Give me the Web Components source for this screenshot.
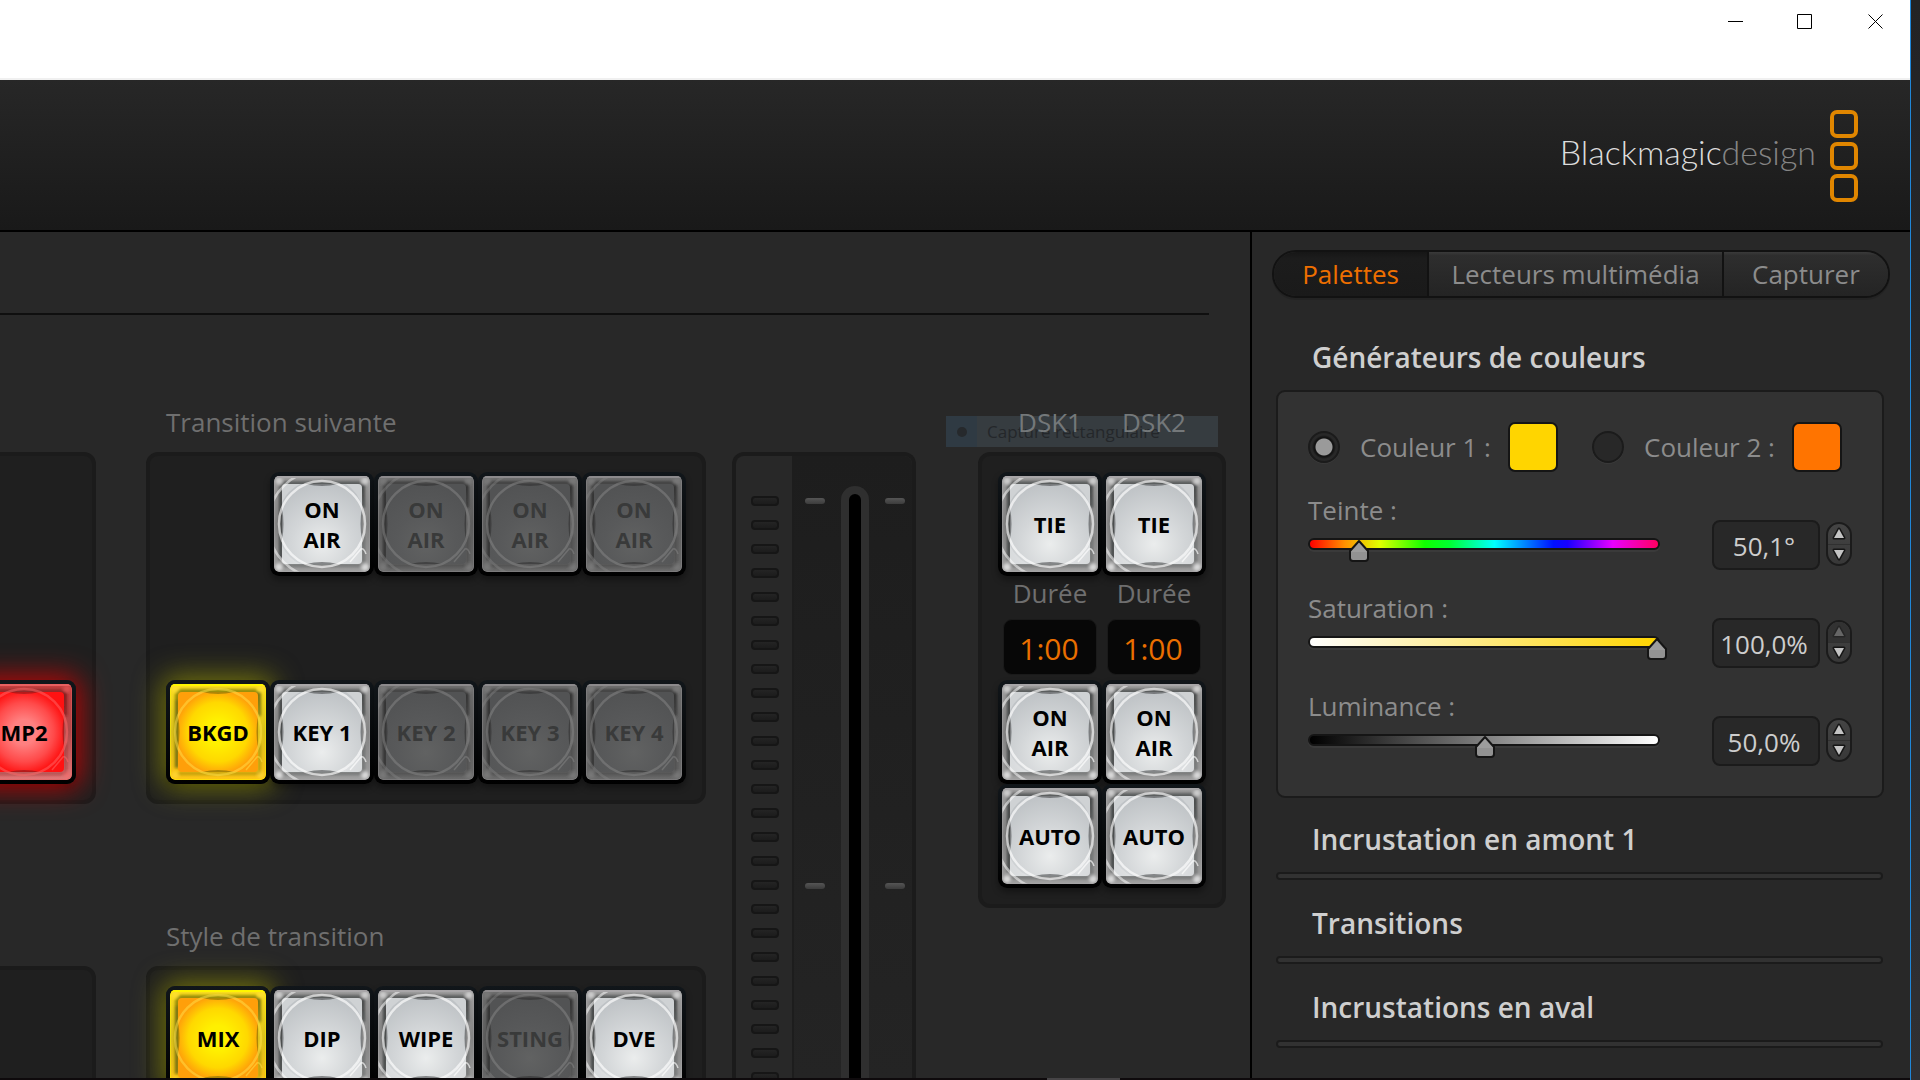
<!DOCTYPE html>
<html lang="fr">
<head>
<meta charset="utf-8">
<title>ATEM Software Control</title>
<style>
  html, body { margin: 0; height: 100%; overflow: hidden; background: #282828; }
  body { font-family: "Open Sans", "Noto Sans", sans-serif; }
</style>
</head>
<body>
<switcher-app></switcher-app>

<script>
const define = (name, html, setup) => {
  const template = document.createElement('template');
  template.innerHTML = html;
  customElements.define(name, class extends HTMLElement {
    constructor() {
      super();
      this.attachShadow({ mode: 'open' }).append(template.content.cloneNode(true));
    }
    connectedCallback() { if (setup) setup(this, this.shadowRoot); }
  });
};

/* Window caption with minimise / maximise / close */
define('title-bar', `
<style>
  :host { display: flex; justify-content: flex-end; align-items: flex-start; height: 78px; background: #fff; border-bottom: 2px solid #f0f0f0; }
  button { width: 70px; height: 43px; padding: 0; border: 0; background: none; display: flex; align-items: center; justify-content: center; }
  svg { display: block; fill: none; stroke: #000; }
</style>
<button aria-label="Réduire"><svg width="15" height="15"><path d="M0 7.5H15"/></svg></button>
<button aria-label="Agrandir"><svg width="16" height="15"><path d="M.5 .5H14.5V14.5H.5Z"/></svg></button>
<button aria-label="Fermer"><svg width="15" height="15"><path d="M.5 .5L14.5 14.5M14.5 .5L.5 14.5"/></svg></button>
`);

define('brand-header', `
<style>
  :host { display: flex; justify-content: flex-end; align-items: center; gap: 14px; box-sizing: border-box; height: 152px; padding: 2px 52px 0 0;
    background: linear-gradient(#272727, #191919); border-bottom: 2px solid #000; }
  p { margin: 0 0 8px; font: 300 34px/48px Lato, sans-serif; color: #dcdcdc; }
  p span { color: #858585; }
  svg { display: block; fill: none; stroke: #e08600; stroke-width: 4; }
</style>
<p>Blackmagic<span>design</span></p>
<svg width="28" height="92"><rect x="2" y="2" width="24" height="24" rx="5"/><rect x="2" y="34" width="24" height="24" rx="5"/><rect x="2" y="66" width="24" height="24" rx="5"/></svg>
`);

/* Illuminated push button */
define('key-button', `
<style>
  :host { display: block; width: 104px; height: 104px;
    --f1: #ebeded; --f2: #d3d6d8; --f3: #bfc3c6; --e1: #a0a0a0; --e2: #858585; --e3: #a0a0a0; --shade: #3c3e40; --ring: #fff; --ringo: .65; --top: #a8a6a8; --ink: #000; }
  :host([state=off]) { --f1: #616262; --f2: #58595a; --f3: #525354; --e1: #707070; --e2: #5e5e5e; --e3: #6a6a6a; --shade: #2e2e2e; --ring: #888; --ringo: .5; --top: #8c8a8c; --ink: #393a3a; }
  :host([state=yellow]) { --f1: #fff000; --f2: #ffd800; --f3: #ff9f0a; --e1: #ffe01e; --e2: #dcc21c; --e3: #ffc414; --shade: #6a6808; --ring: #ffe24a; --ringo: .5; --top: #fff600; }
  :host([state=red]) { --f1: #ff8080; --f2: #ff4a4a; --f3: #ff1212; --e1: #c84040; --e2: #b04a4a; --e3: #e07878; --shade: #7a1818; --ring: #ff6a6a; --ringo: .5; --top: #e86060; }
  button { position: relative; display: grid; place-items: center; box-sizing: border-box; width: 104px; height: 104px; padding: 4px; border: 0; border-radius: 9px;
    background: linear-gradient(#11161a, #000); box-shadow: 0 4px 6px rgba(0,0,0,.35); font: inherit; color: var(--ink); }
  :host([state=yellow]) button { box-shadow: 0 0 28px 4px rgba(170,170,0,.62), 0 4px 6px rgba(0,0,0,.35); }
  :host([state=red]) button { box-shadow: 0 0 28px 4px rgba(230,0,0,.8), 0 4px 6px rgba(0,0,0,.35); }
  svg, span { grid-area: 1 / 1; }
  svg { display: block; border-radius: 5px; }
  span { position: relative; font-size: 22px; line-height: 30px; font-weight: 700; text-align: center; }
  .l1 { stop-color: var(--f1); } .l2 { stop-color: var(--f2); } .l3 { stop-color: var(--f3); }
  .m1 { stop-color: var(--e1); } .m2 { stop-color: var(--e2); } .m3 { stop-color: var(--e3); }
  .s { fill: var(--shade); } .r { stroke: var(--ring); fill: none; opacity: var(--ringo); }
  .wide { opacity: calc(var(--ringo) * .8); }
  .corner { fill: var(--ring); opacity: .25; }
</style>
<button part="key">
  <svg width="96" height="96" viewBox="0 0 96 96" aria-hidden="true">
    <defs>
      <radialGradient id="f" cx="50%" cy="75%" r="75%"><stop class="l1" offset="0"/><stop class="l2" offset=".5"/><stop class="l3" offset="1"/></radialGradient>
      <radialGradient id="g" cx="50%" cy="50%" r="62%"><stop class="l1" offset=".25"/><stop class="l2" offset=".6"/><stop class="l3" offset=".85"/></radialGradient>
      <linearGradient id="m" x2="0" y2="1"><stop class="m1" offset="0"/><stop class="m2" offset=".5"/><stop class="m3" offset="1"/></linearGradient>
      <filter id="b" x="-20%" y="-20%" width="140%" height="140%"><feGaussianBlur stdDeviation="1.4"/></filter>
      <clipPath id="left"><path d="M0 0H40V96H0Z"/></clipPath>
    </defs>
    <rect width="96" height="96" rx="5" fill="url(#m)"/>
    <g filter="url(#b)">
      <path class="s" opacity=".7" d="M10 5H86L90 12V32L86 10H10L8 84H5V10Z"/>
      <path class="s" opacity=".85" d="M86 8H91V32H88Z M5 16H9V84H5Z"/>
      <path class="s" opacity=".45" d="M8 88H88V91H8Z M88 60H91V90H88Z"/>
      <circle class="r" cx="5" cy="5" r="2" stroke-width="2"/><circle class="r" cx="91" cy="91" r="2" stroke-width="3"/><circle class="r" cx="5" cy="91" r="2" stroke-width="3"/><circle class="r" cx="91" cy="5" r="2" stroke-width="2"/>
    </g>
    <rect x="8" y="8" width="80" height="80" rx="4" class="face" fill="url(#f)"/>
    <path class="corner" d="M72 8H84Q88 8 88 12V30Q84 16 72 8Z M88 66V84Q88 88 84 88H66Q80 82 88 66Z M8 70V84Q8 88 12 88H26Q14 82 8 70Z M26 8H12Q8 8 8 12V26Q14 14 26 8Z"/>
    <path class="s" opacity=".55" d="M32 8H64Q48 12 32 8Z M32 88H64Q48 84 32 88Z M8 32V64Q11 48 8 32Z M88 32V64Q85 48 88 32Z"/>
    <circle class="r" cx="48" cy="48" r="43" stroke-width="2.5"/>
    <circle class="r wide" cx="48" cy="48" r="54" stroke-width="2.5" clip-path="url(#left)"/>
    <path class="r" stroke-width="1.5" d="M76 86L87 73Q90 72 92 78"/>
    <rect width="96" height="2" style="fill:var(--top)"/>
    <rect x=".5" y=".5" width="95" height="95" rx="5" fill="none" style="stroke:var(--top)" opacity=".5"/>
  </svg>
  <span><slot></slot></span>
</button>
`, (host, root) => {
  const lit = ['yellow', 'red'].includes(host.getAttribute('state'));
  if (lit) {
    root.querySelector('.face').setAttribute('fill', 'url(#g)');
    root.querySelectorAll('.wide, .corner').forEach(el => el.remove());
  }
  if (host.getAttribute('state') === 'off') {
    root.querySelectorAll('.corner').forEach(el => el.remove());
    root.querySelector('button').disabled = true;
  }
});

define('key-panel', `
<style>
  :host { display: block; box-sizing: border-box; padding: 16px; border: 4px solid #1b1b1b; border-radius: 12px; background: #1f1f1f; }
</style>
<slot></slot>
`);

define('column-label', `
<style>
  :host { display: block; height: 36px; padding-bottom: 12px; font-size: 26px; line-height: 36px; color: #6f6f6f; white-space: nowrap; }
</style>
<slot></slot>
`);

/* Transition lever with its level lights */
define('transition-lever', `
<style>
  :host { display: flex; box-sizing: border-box; width: 184px; border: 4px solid #1b1b1b; border-bottom: 0; border-radius: 12px 12px 0 0; background: #282828; overflow: hidden; }
  .lights { display: flex; flex-direction: column; align-items: center; gap: 14px; width: 54px; padding: 40px 0 0 2px; border-right: 2px solid #1d1d1d; overflow: hidden; }
  .lights i { flex: none; box-sizing: border-box; width: 28px; height: 10px; border: 2px solid #161616; border-radius: 4px; background: linear-gradient(#242424, #1c1c1c); }
  .travel { flex: 1; display: flex; justify-content: space-between; padding: 30px 7px 0 11px; background: linear-gradient(#1d1d1d, #242424); }
  .marks { display: flex; flex-direction: column; gap: 379px; padding-top: 12px; }
  .marks i { width: 20px; height: 6px; border-radius: 3px; background: linear-gradient(#555, #3c3c3c); }
  .slot { box-sizing: border-box; width: 28px; padding: 8px 8px 0; border-radius: 14px 14px 0 0; background: #2f2f2f; display: flex; }
  .slot i { flex: 1; border-radius: 6px 6px 0 0; background: #000; }
</style>
<div class="lights"></div>
<div class="travel"><div class="marks"><i></i><i></i></div><div class="slot"><i></i></div><div class="marks"><i></i><i></i></div></div>
`, (host, root) => {
  root.querySelector('.lights').innerHTML = '<i></i>'.repeat(30);
});

define('rate-field', `
<style>
  :host { display: flex; flex-direction: column; align-items: center; box-sizing: border-box; width: 104px; height: 104px; }
  label { font-size: 26px; line-height: 34px; color: #6f6f6f; }
  input { box-sizing: border-box; width: 94px; height: 56px; margin-top: 9px; padding: 2px 2px 0 0; border: 1px solid #1a1a1a; border-radius: 9px; background: #070707;
    font: 30px/40px "Open Sans", "Noto Sans", sans-serif; color: #ea6f00; text-align: center; }
</style>
<label for="rate">Durée</label><input id="rate" value="1:00">
`);

define('switcher-desk', `
<style>
  :host { display: flex; flex-direction: column; min-width: 0; overflow: hidden; }
  .top { flex: none; height: 81px; margin-right: 41px; border-bottom: 2px solid #0f0f0f; }
  .board { flex: 1; min-height: 0; display: flex; padding: 89px 24px 0 0; }
  .edge { flex: 1; min-width: 0; display: flex; flex-direction: column; margin-left: -40px; }
  .edge key-panel { flex: none; height: 352px; display: flex; align-items: flex-end; justify-content: flex-end; }
  .edge .first { margin-top: 48px; }
  .edge .below { margin-top: 162px; }
  .bank { margin-left: 50px; }
  .bank column-label { padding-left: 20px; }
  .second { margin-top: 114px; }
  .keys { display: grid; grid-template-columns: repeat(5, 104px); grid-auto-rows: 104px; }
  .keys .start2 { grid-column: 2; }
  .keys .row3 { grid-row: 3; }
  transition-lever { margin: 48px 0 0 26px; }
  .dsk { position: relative; margin-left: 62px; }
  .names { display: grid; grid-template-columns: 104px 104px; justify-content: center; text-align: center; position: relative; }
  .names column-label { color: #74787a; }
  .pair { display: grid; grid-template-columns: 104px 104px; }
  .ghost { position: absolute; top: 12px; right: 8px; display: flex; align-items: center; width: 272px; height: 31px; background: #363c40;
    font-size: 17px; line-height: 24px; color: #24272a; white-space: nowrap; }
  .ghost i { display: grid; place-items: center; width: 31px; height: 31px; margin-right: 10px; background: #2f3a43; }
  .ghost i::before { content: ""; width: 10px; height: 10px; border-radius: 50%; background: #26292c; }
</style>
<div class="top"></div>
<div class="board">
  <div class="edge">
    <key-panel class="first"><key-button state="red">MP2</key-button></key-panel>
    <key-panel class="below"></key-panel>
  </div>
  <div class="bank">
    <column-label>Transition suivante</column-label>
    <key-panel><div class="keys">
      <key-button class="start2">ON<br>AIR</key-button><key-button state="off">ON<br>AIR</key-button><key-button state="off">ON<br>AIR</key-button><key-button state="off">ON<br>AIR</key-button>
      <key-button class="row3" state="yellow">BKGD</key-button><key-button class="row3">KEY 1</key-button><key-button class="row3" state="off">KEY 2</key-button><key-button class="row3" state="off">KEY 3</key-button><key-button class="row3" state="off">KEY 4</key-button>
    </div></key-panel>
    <column-label class="second">Style de transition</column-label>
    <key-panel><div class="keys">
      <key-button state="yellow">MIX</key-button><key-button>DIP</key-button><key-button>WIPE</key-button><key-button state="off">STING</key-button><key-button>DVE</key-button>
    </div></key-panel>
  </div>
  <transition-lever></transition-lever>
  <div class="dsk">
    <div class="ghost"><i></i>Capture rectangulaire</div>
    <div class="names"><column-label>DSK1</column-label><column-label>DSK2</column-label></div>
    <key-panel><div class="pair">
      <key-button>TIE</key-button><key-button>TIE</key-button>
      <rate-field></rate-field><rate-field></rate-field>
      <key-button>ON<br>AIR</key-button><key-button>ON<br>AIR</key-button>
      <key-button>AUTO</key-button><key-button>AUTO</key-button>
    </div></key-panel>
  </div>
</div>
`);

define('view-tabs', `
<style>
  :host { display: flex; height: 44px; margin: 0 20px; border: 2px solid #121212; border-radius: 24px; overflow: hidden; box-shadow: 0 2px rgba(0,0,0,.12); }
  button { flex: 1 1 auto; padding: 0 26px; border: 0; border-left: 2px solid #121212; background: linear-gradient(#3a3a3a, #2e2e2e 8%, #242424);
    font: 26px/36px "Open Sans", "Noto Sans", sans-serif; color: #8c8c8c; white-space: nowrap; }
  button[aria-pressed=true] { border-left: 0; background: linear-gradient(#161616, #1c1c1c 15%, #1a1a1a); color: #ee6f00; }
  .mid { padding: 0 20px; }
</style>
<button aria-pressed="true">Palettes</button><button class="mid">Lecteurs multimédia</button><button>Capturer</button>
`);

define('palette-section', `
<style>
  :host { display: block; margin: 0 27px 2px 24px; }
  h2 { margin: 0; padding: 22px 36px 14px; font-size: 28px; line-height: 38px; font-weight: 600; color: #cfcfcf; white-space: nowrap; }
  .body { box-sizing: border-box; min-height: 8px; border: 2px solid #1b1b1b; border-radius: 4px; background: #323232; }
  :host([open]) { margin: 0 26px 0 24px; }
  :host([open]) .body { padding: 30px; border-radius: 9px; }
</style>
<h2></h2><div class="body"><slot></slot></div>
`, (host, root) => { root.querySelector('h2').textContent = host.getAttribute('heading'); });

define('colour-choice', `
<style>
  :host { display: grid; grid-template-columns: 32px 128px 50px; gap: 20px; align-items: center; height: 50px; }
  input { appearance: none; box-sizing: border-box; width: 32px; height: 32px; margin: 0; border: 2px solid #1b1b1b; border-radius: 50%; background: #282828; box-shadow: 0 1px #3a3a3a; }
  input:checked { background: radial-gradient(circle, #9a9a9a 8px, #141414 9px, #141414 10px, #282828 12px); }
  label { font-size: 26px; line-height: 36px; color: #8c8c8c; white-space: nowrap; }
  i { box-sizing: border-box; height: 50px; border: 2px solid #151515; border-radius: 7px; }
</style>
<input type="radio" id="pick"><label for="pick"></label><i></i>
`, (host, root) => {
  root.querySelector('label').textContent = host.getAttribute('label');
  root.querySelector('input').checked = host.hasAttribute('checked');
  root.querySelector('i').style.background = host.getAttribute('colour');
});

define('value-slider', `
<style>
  :host { display: flex; align-items: flex-start; }
  .left { flex: 1; margin-right: 52px; }
  label { display: block; font-size: 26px; line-height: 36px; color: #8c8c8c; }
  .track { position: relative; box-sizing: border-box; height: 12px; margin-top: 10px; border: 2px solid #151515; border-radius: 6px; box-shadow: 0 2px #3a3a3a; }
  .track input { position: absolute; left: -8px; right: -8px; top: 0; width: calc(100% + 16px); height: 22px; margin: 0; opacity: 0; }
  .track svg { position: absolute; top: 0; left: calc(1px + (100% - 2px) * var(--at)); margin-left: -11px; pointer-events: none; overflow: visible; }
  .number { box-sizing: border-box; width: 108px; height: 50px; margin: 28px 6px 0 0; padding: 2px 4px 0 0; border: 2px solid #1b1b1b; border-radius: 8px; background: #282828;
    font: 26px/36px "Open Sans", "Noto Sans", sans-serif; color: #cdcdcd; text-align: center; }
  .step { box-sizing: border-box; display: flex; flex-direction: column; width: 26px; height: 44px; margin-top: 30px; border: 2px solid #1b1b1b; border-radius: 13px; background: linear-gradient(#444, #383838); }
  .step button { flex: 1; display: grid; place-items: center; padding: 0; border: 0; background: none; }
  .step button + button { border-top: 1px solid #303030; }
  .step svg { display: block; fill: #c4c4c4; stroke: #151515; stroke-width: 3; stroke-linejoin: round; paint-order: stroke; overflow: visible; }
  .step button:disabled { border-radius: 11px 11px 0 0; background: #323232; }
  .step button:disabled svg { fill: #666; stroke: #262626; }
</style>
<div class="left">
  <label for="range"></label>
  <div class="track"><input type="range" id="range" min="0" max="1" step="0.001">
    <svg width="22" height="22" viewBox="0 0 22 22"><path d="M11 1L20 11V18Q20 21 17 21H5Q2 21 2 18V11Z" fill="#929292" stroke="#151515" stroke-width="2" stroke-linejoin="round"/><path d="M11 3L19 12H3Z" fill="#a3a3a3" opacity=".7"/></svg></div>
</div>
<input class="number" id="number" type="text">
<div class="step">
  <button aria-label="Augmenter"><svg width="12" height="11"><path d="M6 1L11 10H1Z"/></svg></button>
  <button aria-label="Diminuer"><svg width="12" height="11"><path d="M1 1H11L6 10Z"/></svg></button>
</div>
`, (host, root) => {
  const get = n => host.getAttribute(n);
  root.querySelector('label').textContent = get('label');
  root.querySelector('.number').value = get('value');
  root.querySelector('.number').setAttribute('aria-label', get('label'));
  const range = root.querySelector('#range'), track = root.querySelector('.track');
  range.value = get('at');
  track.style.background = `linear-gradient(90deg, ${get('ramp')})`;
  const place = () => {
    track.style.setProperty('--at', range.value);
    root.querySelector('.step button').disabled = +range.value >= 1;
  };
  range.addEventListener('input', place);
  place();
});

define('palette-sidebar', `
<style>
  :host { display: block; box-sizing: border-box; padding-top: 18px; border-left: 2px solid #000; overflow: hidden; }
  view-tabs { margin-bottom: 18px; }
  .choices { display: flex; gap: 34px; }
  value-slider { margin-top: 20px; }
</style>
<view-tabs></view-tabs>
<palette-section open heading="Générateurs de couleurs">
  <div class="choices">
    <colour-choice label="Couleur 1 :" colour="#ffd500" checked></colour-choice>
    <colour-choice label="Couleur 2 :" colour="#ff7400"></colour-choice>
  </div>
  <value-slider label="Teinte :" value="50,1°" at="0.139" ramp="#ff0000, #ff9000 10%, #e0ff00 20%, #10ff00 33%, #00ff30 40%, #00ffff 53%, #0010ff 70%, #1800ff 74%, #e800ff 87%, #ff0060"></value-slider>
  <value-slider label="Saturation :" value="100,0%" at="1" ramp="#ffffff, #ffd500"></value-slider>
  <value-slider label="Luminance :" value="50,0%" at="0.502" ramp="#000000, #ffffff"></value-slider>
</palette-section>
<palette-section heading="Incrustation en amont 1"></palette-section>
<palette-section heading="Transitions"></palette-section>
<palette-section heading="Incrustations en aval"></palette-section>
`);

define('switcher-app', `
<style>
  :host { display: flex; height: 100vh; background: linear-gradient(#232325, #303033); }
  .window { flex: 1; min-width: 0; display: flex; flex-direction: column; border-right: 1px solid #1f86d8; margin-right: 9px; background: #282828; }
  title-bar, brand-header, footer { flex: none; }
  .work { flex: 1; min-height: 0; display: grid; grid-template-columns: minmax(0, 1fr) 660px; }
  footer { height: 2px; background: #0e0a0c; display: flex; justify-content: center; padding-left: 256px; }
  footer i { width: 73px; background: #464446; }
</style>
<div class="window">
  <title-bar></title-bar>
  <brand-header></brand-header>
  <div class="work"><switcher-desk></switcher-desk><palette-sidebar></palette-sidebar></div>
  <footer><i></i></footer>
</div>
`);
</script>
</body>
</html>
